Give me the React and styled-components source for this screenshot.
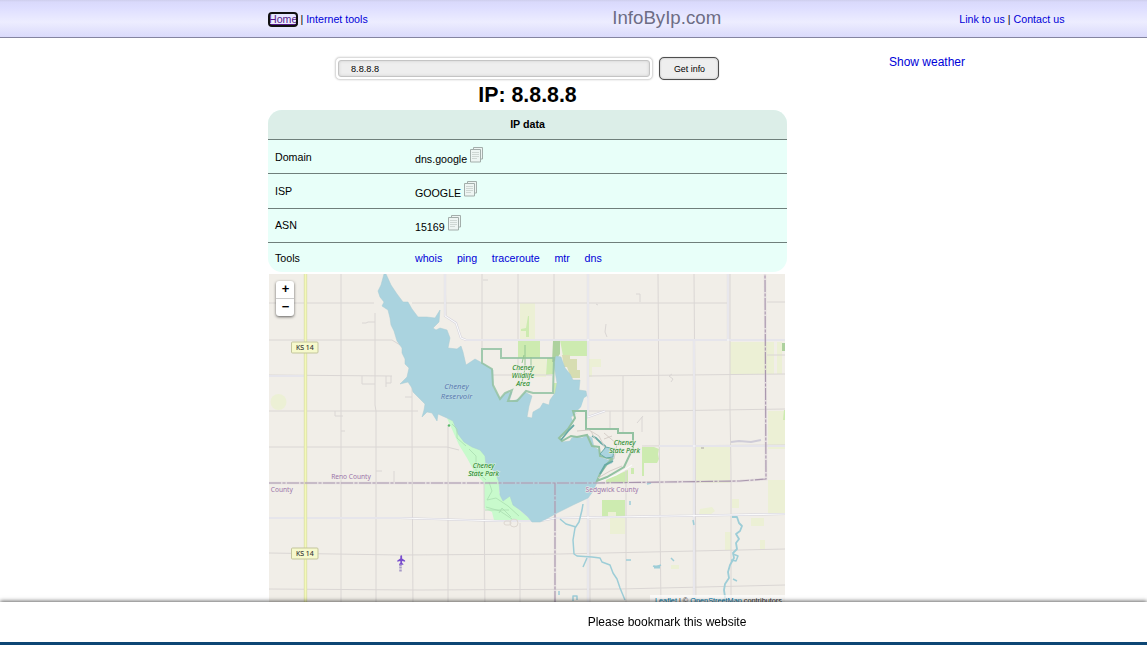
import React from 'react';
import styled, { createGlobalStyle } from 'styled-components';

const GlobalStyle = createGlobalStyle`
  * { box-sizing: border-box; }
  html, body { margin: 0; padding: 0; background: #fff; overflow: hidden; }
  body { font-family: "Liberation Sans", Arial, sans-serif; font-size: 12px; color: #000; }
  h1 { margin: 0; }
`;

const Page = styled.div`
  height: 100vh;
  overflow: hidden;
`;

const Header = styled.header`
  height: 38px;
  padding: 0 82.5px 0 269px;
  border-bottom: 1px solid #8484a0;
  background: linear-gradient(#ceceec 0, #d9d9fb 2px, #dedeff 8px, #ededff 22px, #dadafb 37px);
  display: grid;
  grid-template-columns: 1fr auto 1fr;
  align-items: center;
  font-size: 10.67px;
  line-height: 13px;
`;

const Nav = styled.nav`
  padding-top: 1px;
  text-align: ${(p) => p.$align || 'left'};
  white-space: pre;
`;

const Link = styled.a`
  color: ${(p) => (p.$visited ? '#551a8b' : '#0000d8')};
  text-decoration: none;
`;

const FocusedLink = styled(Link)`
  display: inline-block;
  line-height: 11px;
  outline: 2px solid #101010;
  outline-offset: -1px;
  padding: 1px 0;
  margin: -1px 0;
  border-radius: 3px;
  text-decoration: underline;
`;

const Brand = styled.div`
  font-size: 18.67px;
  line-height: 24px;
  padding-bottom: 2px;
  color: #6d6d85;
`;

const Body = styled.div`
  display: flex;
  padding-left: 268px;
`;

const Main = styled.main`
  width: 519px;
  flex: none;
  padding-top: 19px;
`;

const Aside = styled.aside`
  padding: 17px 0 0 102px;
  line-height: 14px;
`;

const SearchForm = styled.form`
  display: flex;
  justify-content: center;
  gap: 6px;
  height: 24px;
  margin: 0;
  padding-right: 1px;
`;

const SearchFrame = styled.div`
  width: 318px;
  height: 23px;
  padding: 2px;
  border: 1px solid #dcdcdc;
  border-radius: 5px;
  background: #fff;
  box-shadow: 0 0 2px #ccc;
`;

const SearchInput = styled.input`
  display: block;
  width: 100%;
  height: 17px;
  padding: 0 12px;
  border: 1px solid #c4c4c4;
  border-radius: 3px;
  background: #eee;
  box-shadow: inset 0 0 3px #ccc;
  font: 9.2px "Liberation Sans", Arial, sans-serif;
  color: #000;
  outline: none;
`;

const SubmitButton = styled.button`
  width: 60px;
  height: 23px;
  padding: 0 0 0 1px;
  border: 1px solid #4e4e4e;
  border-radius: 5px;
  background: #eee;
  box-shadow: inset 0 0 2px #aaa, 0 0 1px #999;
  font: 8.9px "Liberation Sans", Arial, sans-serif;
  color: #000;
`;

const Title = styled.h1`
  height: 29px;
  padding-top: 1px;
  font-size: 21.33px;
  line-height: 26px;
  text-align: center;
`;

const Table = styled.section`
  height: 162px;
  border-radius: 14px;
  overflow: hidden;
  background: #e8fff9;
  font-size: 10.67px;
`;

const TableHead = styled.div`
  height: 30px;
  background: #dceee8;
  border-bottom: 1px solid #6f7f7b;
  text-align: center;
  font-weight: bold;
  line-height: 28px;
`;

const Row = styled.div`
  display: grid;
  grid-template-columns: 140px 1fr;
  align-items: start;
  height: ${(p) => p.$height}px;
  padding-top: ${(p) => p.$top}px;
  padding-left: 7px;
  border-bottom: ${(p) => (p.$last ? 'none' : '1px solid #6f7f7b')};
  line-height: 13px;
`;

const Label = styled.div`
  padding-top: ${(p) => (p.$flush ? 0 : 4)}px;
`;

const Value = styled.div`
  display: flex;
  align-items: flex-start;
  gap: 3px;

  span { padding-top: 6px; }
`;

const Tools = styled.div`
  display: flex;
  gap: 14.7px;
`;

const MapFrame = styled.div`
  position: relative;
  width: 516px;
  height: 340px;
  margin: 2px 0 0 1px;
  background: #f1eee8;
  overflow: hidden;

  svg { display: block; }
`;

const ZoomControl = styled.div`
  position: absolute;
  top: 7px;
  left: 7px;
  width: 18px;
  height: 35px;
  border-radius: 3px;
  background: #fff;
  box-shadow: 0 1px 3px rgba(0, 0, 0, 0.6);
`;

const ZoomButton = styled.div`
  height: 18px;
  padding-left: 1px;
  border-bottom: ${(p) => (p.$divided ? '1px solid #ccc' : 'none')};
  text-align: center;
  font-size: 13px;
  font-weight: bold;
  line-height: 16px;
`;

const Attribution = styled.div`
  position: absolute;
  left: 381px;
  top: 321px;
  width: 135px;
  height: 13px;
  padding-left: 5px;
  background: rgba(255, 255, 255, 0.7);
  font-size: 7.3px;
  line-height: 12px;
  white-space: nowrap;
  color: #333;

  a { color: #0078a8; }
`;

const BookmarkBar = styled.footer`
  position: fixed;
  left: 0;
  right: 0;
  bottom: 0;
  height: 43px;
  padding-left: 187px;
  border-bottom: 3px solid #0d4674;
  background: #fff;
  box-shadow: 0 -1px 4px rgba(0, 0, 0, 0.6);
  text-align: center;
  line-height: 40px;
`;

const CopyIcon = () => (
  <svg width="13" height="16" viewBox="0 0 13 16" fill="#eef5f3" stroke="#a3aeab" strokeWidth="1">
    <path d="M3.500 2.500V.500h9v11.500h-2" />
    <path d="M.5 2.500h10v12.500H.5z" />
    <path d="M2 5.500h7M2 7.500h7M2 9.500h7M2 11.500h5" stroke="#c6cfcc" strokeWidth=".8" />
  </svg>
);

const records = [
  { label: 'Domain', value: 'dns.google', height: 34, top: 7 },
  { label: 'ISP', value: 'GOOGLE', height: 35, top: 7 },
  { label: 'ASN', value: '15169', height: 34, top: 6 },
];

const tools = ['whois', 'ping', 'traceroute', 'mtr', 'dns'];

const RouteShield = ({ y }) => (
  <g>
    <rect x="291.500" y={y} width="26.500" height="11" rx="1" fill="#f6f9cc" stroke="#c3c59c" />
    <text x="304.800" y={y + 8.1} textAnchor="middle" fontSize="6.900" fill="#333" stroke="#333" strokeWidth=".1">KS 14</text>
  </g>
);

const MapLabel = ({ x, y, lines, color, size = 6.4, step = 8, italic, halo }) => (
  <text
    x={x} y={y} textAnchor="middle" fontSize={size} fill={color} fontStyle={italic ? 'italic' : 'normal'}
    stroke={halo} strokeWidth={halo ? 1.2 : 0} paintOrder="stroke"
  >
    {lines.map((line, i) => (
      <tspan key={line} x={x} y={y + i * step}>{line}</tspan>
    ))}
  </text>
);

const LAKE =
  'M384 274L381 285L378 291L380 297L384 302L382 306L388 310L390 318L391 325L394 331L397 341L402 348L402 353L405 359L405 364L409 368L407 377L400 384L408 382L412 388L413 392L420 399L425 404L424 410L422 417L427 412L432 413L437 421L438 414L447 418L453 421L458 434L464 442L472 447L480 450L485 456L486 465L495 472L499 482L500 495L503 501L510 496L513 505L520 510L528 517L532 522L540 522L548 518L557 513L573 505L588 498L594 490L597 482L600 473L604 466L612 463L614 457L608 460L600 457L599 450L594 447L592 438L587 435L582 438L573 436L570 441L562 442L558 438L564 434L568 429L573 422L571 417L580 411L583 405L587 397L586 391L579 390L580 380L573 380L570 374L565 368L561 357L556 356L554 365L557 383L555 393L550 400L549 405L543 403L540 408L533 412L532 418L527 417L529 406L532 396L525 392L519 399L509 402L512 392L506 393L500 399L493 387L493 370L484 364L475 359L466 365L463 352L461 346L457 349L448 348L450 338L447 330L440 328L436 330L433 328L439 322L440 310L435 318L427 317L418 317L412 309L408 302L403 302L397 294L391 285L386 274Z';

const MINOR_ROADS =
  'M445 274V316L456 323L461 338L466 340H785M269 518H400L500 521H535M540 521L556 518L785 514M588 274V417L605 411M588 492V614M694 341V614M728 274V341M269 376H305M659 446H785';

const COUNTY_LINE = 'M269 483H596L740 481L766 479L765 274M555 483V611';

const CountyMap = () => (
  <svg width="516" height="340" viewBox="269 274 516 340" fontFamily='"Noto Sans", sans-serif' fill="none">
    <rect x="269" y="274" width="516" height="340" fill="#f1eee8" />

    <g fill="#ecf0d5">
      <path d="M520 303h15v37h-15zM730 342h44v32h-44zM777 342h5v32h-5zM768 411h17v38h-17zM768 480h17v34h-17zM696 447h34v36h-34zM610 518h15v16h-15zM725 532h6v18h-6zM751 518h13v8h-13zM760 540h5v9h-5zM589 359h12v8h-9v10h-3zM532 358h14v19h-14z" />
      <circle cx="278.500" cy="402" r="8" />
      <path d="M700 509l12-2 3 4-4 3h-12zM732 499h7v9h-7zM671 565h8v4h-8z" />
    </g>
    <g fill="#cdebb0">
      <path d="M518 340h22v18h-22zM560 340h27v16h-24zM529 316V337h-3v-6h-5v-2l5-1 2-12zM547 358h7v16l-8 1zM784 410h1v10h-2zM642 447h12l5 2-1 5 1 5-2 4h-13v13h-2zM602 500h23v17h-23zM606 480l22-10v13h-22zM631 468h3v6h-3zM554 383h4v8l-4 4z" />
    </g>
    <path d="M608 512h8v5h-8z" fill="#ecf0d5" />
    <path d="M553 341l7-1v14l-6 8h-2zM782 343h3v8h-3z" fill="#add19e" />
    <path d="M562 355h8v4h7v11h3v8h-9l-4-11h-3z" fill="#d7ddb1" />
    <path d="M447 418L456 421L462 437L474 444L485 449L486 464L499 480V493L505 498L510 496L516 507L531 520H494L492 512L484 508V483L475 473L467 458L459 445Z" fill="#c8facc" />

    <g stroke="#dad6d4" strokeWidth="1">
      <path d="M341 274V611M375 313V405L376 411V611M412 384V431L413 611M445 274l1 41M482 274V348M484 484l1 130M518 274V340M554 274V340M518 358V377M448 425V611M520 523V611" />
      <path d="M588 274V417M590 520V614M658 274L659 417L661 611M694 274L695 410L696 611M730 274V410L731 470V611M623 376V432M626 470V611" />
      <path d="M269 303H374M412 303H482M482 303H728M767 302H785M269 340H392L400 345M269 375L392 376M492 375H552M588 376L785 374M269 411H418M588 411L656 411L785 409M269 447H447L459 450M642 446L785 445M269 553L400 555L560 554L785 549M269 589L420 590L620 589L785 585" />
      <path d="M362 323h4l2-1h7M362 376v8h13M386 376v11M391 376v7h-5M335 411v5h8M341 431h4M376 471h6M394 471v11M606 324l-1 8 2 5M636 294h4v8M672 374l-3 2 4 3-2 3M642 417v15M610 411v18M637 423l6-7M767 355h18M405 397h7M483 280h5M596 304l2 1" />
    </g>
    <path d={MINOR_ROADS} stroke="#d3d1da" strokeWidth="2.200" />
    <path d={`${MINOR_ROADS}M597 482L616 475L632 465`} stroke="#fafafb" strokeWidth="1.100" />

    <path d={LAKE} fill="#aad3df" stroke="#a7cbd3" strokeWidth=".5" />
    <path d="M567 436l8-10 6 1-4 4 4 3-10 4zM584 398l3-2v16l-13 2 7-7z" fill="#f1eee8" />

    <g stroke="#93c2a2" strokeWidth="2">
      <path d="M554 358H501V349H482V363L492 369L493 385L500 399L505 393L512 390L508 401L517 401L526 391L533 393H553Z" opacity=".85" />
      <path d="M586 429V411H573L575 418L568 429L559 438L562 441L571 436L577 437L587 435L592 446L599 447L600 456L612 459L607 464L600 474L597 481L607 477L624 467L633 448V433H618V429Z" />
    </g>
    <path d="M592 436l4 2 5 5 4 3 1 8M561 440l8-10 5-5M600 474l5-9 8-4" stroke="#67aaa5" strokeWidth="1.800" />
    <path d="M606 447l8 2-1 8-7 1-6-4z" fill="#aad3df" stroke="#67aaa5" />
    <path d="M577 431l12-1 10 6 6 12M591 431l4 8M604 439l8-3M598 478l12-7 12-5M604 433l13 11-3 15" stroke="#d6cfc9" />
    <g stroke="#a9ddb0" strokeWidth=".8">
      <path d="M452 424l5 5v9l9 8M469 449l7 7v15l10 9M489 482l3 9-5 9 9-2 12 8 11 10M486 507l14 4 12 8M499 513l3-5 9 9M485 510h24" />
    </g>
    <g stroke="#ddd7d0">
      <circle cx="514" cy="523" r="4" /><rect x="504" y="521" width="7" height="4" rx="2" />
    </g>
    <path d="M525 345v24l-3 13M531 357v18M524 355l-2 8" stroke="#94c791" />
    <circle cx="449" cy="425.500" r="1.200" fill="#58b868" />

    <g stroke="#9dcdd7" strokeWidth="1.500" strokeLinejoin="round">
      <path d="M583 504l-1 6-3 12-4 6-2 12 1 14 3 2 15 1 8 1 2 4 8 3 3 8 4 6 3 9 5 12M560 519l6 5 10 3M587 558l-4 9" />
      <path d="M732 517h5l2 6 3 3-2 5-4 3 3 5-3 4 1 6-4 4 1 5-4 7-2 7 1 6-4 6-1 6 1 7-2 7" strokeWidth="1.800" />
      <path d="M733 554l5 2-2 5-5-1M653 566l3 1 5-2M671 558l3 3M693 520l1 5M626 560h5M573 601v-5h4v4M559 591v4M733 579l4 2M630 501v4M647 484l4-1" />
    </g>
    <path d="M654 567h6" stroke="#9dcdd7" strokeWidth="3" />
    <path d="M701 448h3" stroke="#a9a4a4" />
    <path d="M731 442l8-1 12 1 10-2" stroke="#cfccd8" strokeWidth="2" />

    <path d="M305.500 274V611" stroke="#d3d8a6" strokeWidth="3.300" />
    <path d="M305.500 274V611" stroke="#f4f8b8" strokeWidth="2" />
    <path d={COUNTY_LINE} stroke="#cfbfd0" strokeWidth="2.500" opacity=".35" />
    <path d={COUNTY_LINE} stroke="#a997ad" strokeWidth="1.100" strokeDasharray="12 1.500 3 1.500" />

    <RouteShield y={342} />
    <RouteShield y={548} />
    <MapLabel x={456.5} y={389} lines={['Cheney', 'Reservoir']} color="#587bb0" size={7.7} step={9.5} italic halo="#b6d8e2" />
    <MapLabel x={523} y={370} lines={['Cheney', 'Wildlife', 'Area']} color="#147d18" size={6.8} italic halo="#e8f0df" />
    <MapLabel x={483.5} y={468} lines={['Cheney', 'State Park']} color="#147d18" size={6.8} italic halo="#d9f4d7" />
    <MapLabel x={624.5} y={445} lines={['Cheney', 'State Park']} color="#147d18" size={6.8} italic halo="#e8efe0" />
    <MapLabel x={351} y={479} lines={['Reno County']} color="#9c74a8" size={6.6} halo="#f1eee8" />
    <MapLabel x={281.8} y={492} lines={['County']} color="#9c74a8" size={6.6} halo="#f1eee8" />
    <MapLabel x={612} y={492} lines={['Sedgwick County']} color="#9c74a8" size={6.6} halo="#f1eee8" />
    <path d="M401.200 555l.9 1v2.500l3 2v1.200l-3-.8v2l1.300 1v.8h-4.400v-.8l1.300-1v-2l-3 .8v-1.200l3-2V556z" fill="#784dcc" />
    <path d="M400.500 565v7" stroke="#a699c6" strokeWidth="2.500" strokeDasharray="1.200 .5" />
  </svg>
);

export default function App() {
  return (
    <Page>
      <GlobalStyle />
      <Header>
        <Nav><FocusedLink $visited>Home</FocusedLink>{' | '}<Link>Internet tools</Link></Nav>
        <Brand>InfoByIp.com</Brand>
        <Nav $align="right"><Link>Link to us</Link>{' | '}<Link>Contact us</Link></Nav>
      </Header>
      <Body>
        <Main>
          <SearchForm>
            <SearchFrame><SearchInput defaultValue="8.8.8.8" /></SearchFrame>
            <SubmitButton type="button">Get info</SubmitButton>
          </SearchForm>
          <Title>IP: 8.8.8.8</Title>
          <Table>
            <TableHead>IP data</TableHead>
            {records.map((r) => (
              <Row key={r.label} $height={r.height} $top={r.top}>
                <Label>{r.label}</Label>
                <Value><span>{r.value}</span><CopyIcon /></Value>
              </Row>
            ))}
            <Row $height={29} $top={9} $last>
              <Label $flush>Tools</Label>
              <Tools>{tools.map((t) => <Link key={t}>{t}</Link>)}</Tools>
            </Row>
          </Table>
          <MapFrame>
            <CountyMap />
            <ZoomControl>
              <ZoomButton $divided>+</ZoomButton>
              <ZoomButton>−</ZoomButton>
            </ZoomControl>
            <Attribution><a href="#leaflet">Leaflet</a> | © <a href="#osm">OpenStreetMap</a> contributors</Attribution>
          </MapFrame>
        </Main>
        <Aside><Link>Show weather</Link></Aside>
      </Body>
      <BookmarkBar>Please bookmark this website</BookmarkBar>
    </Page>
  );
}
